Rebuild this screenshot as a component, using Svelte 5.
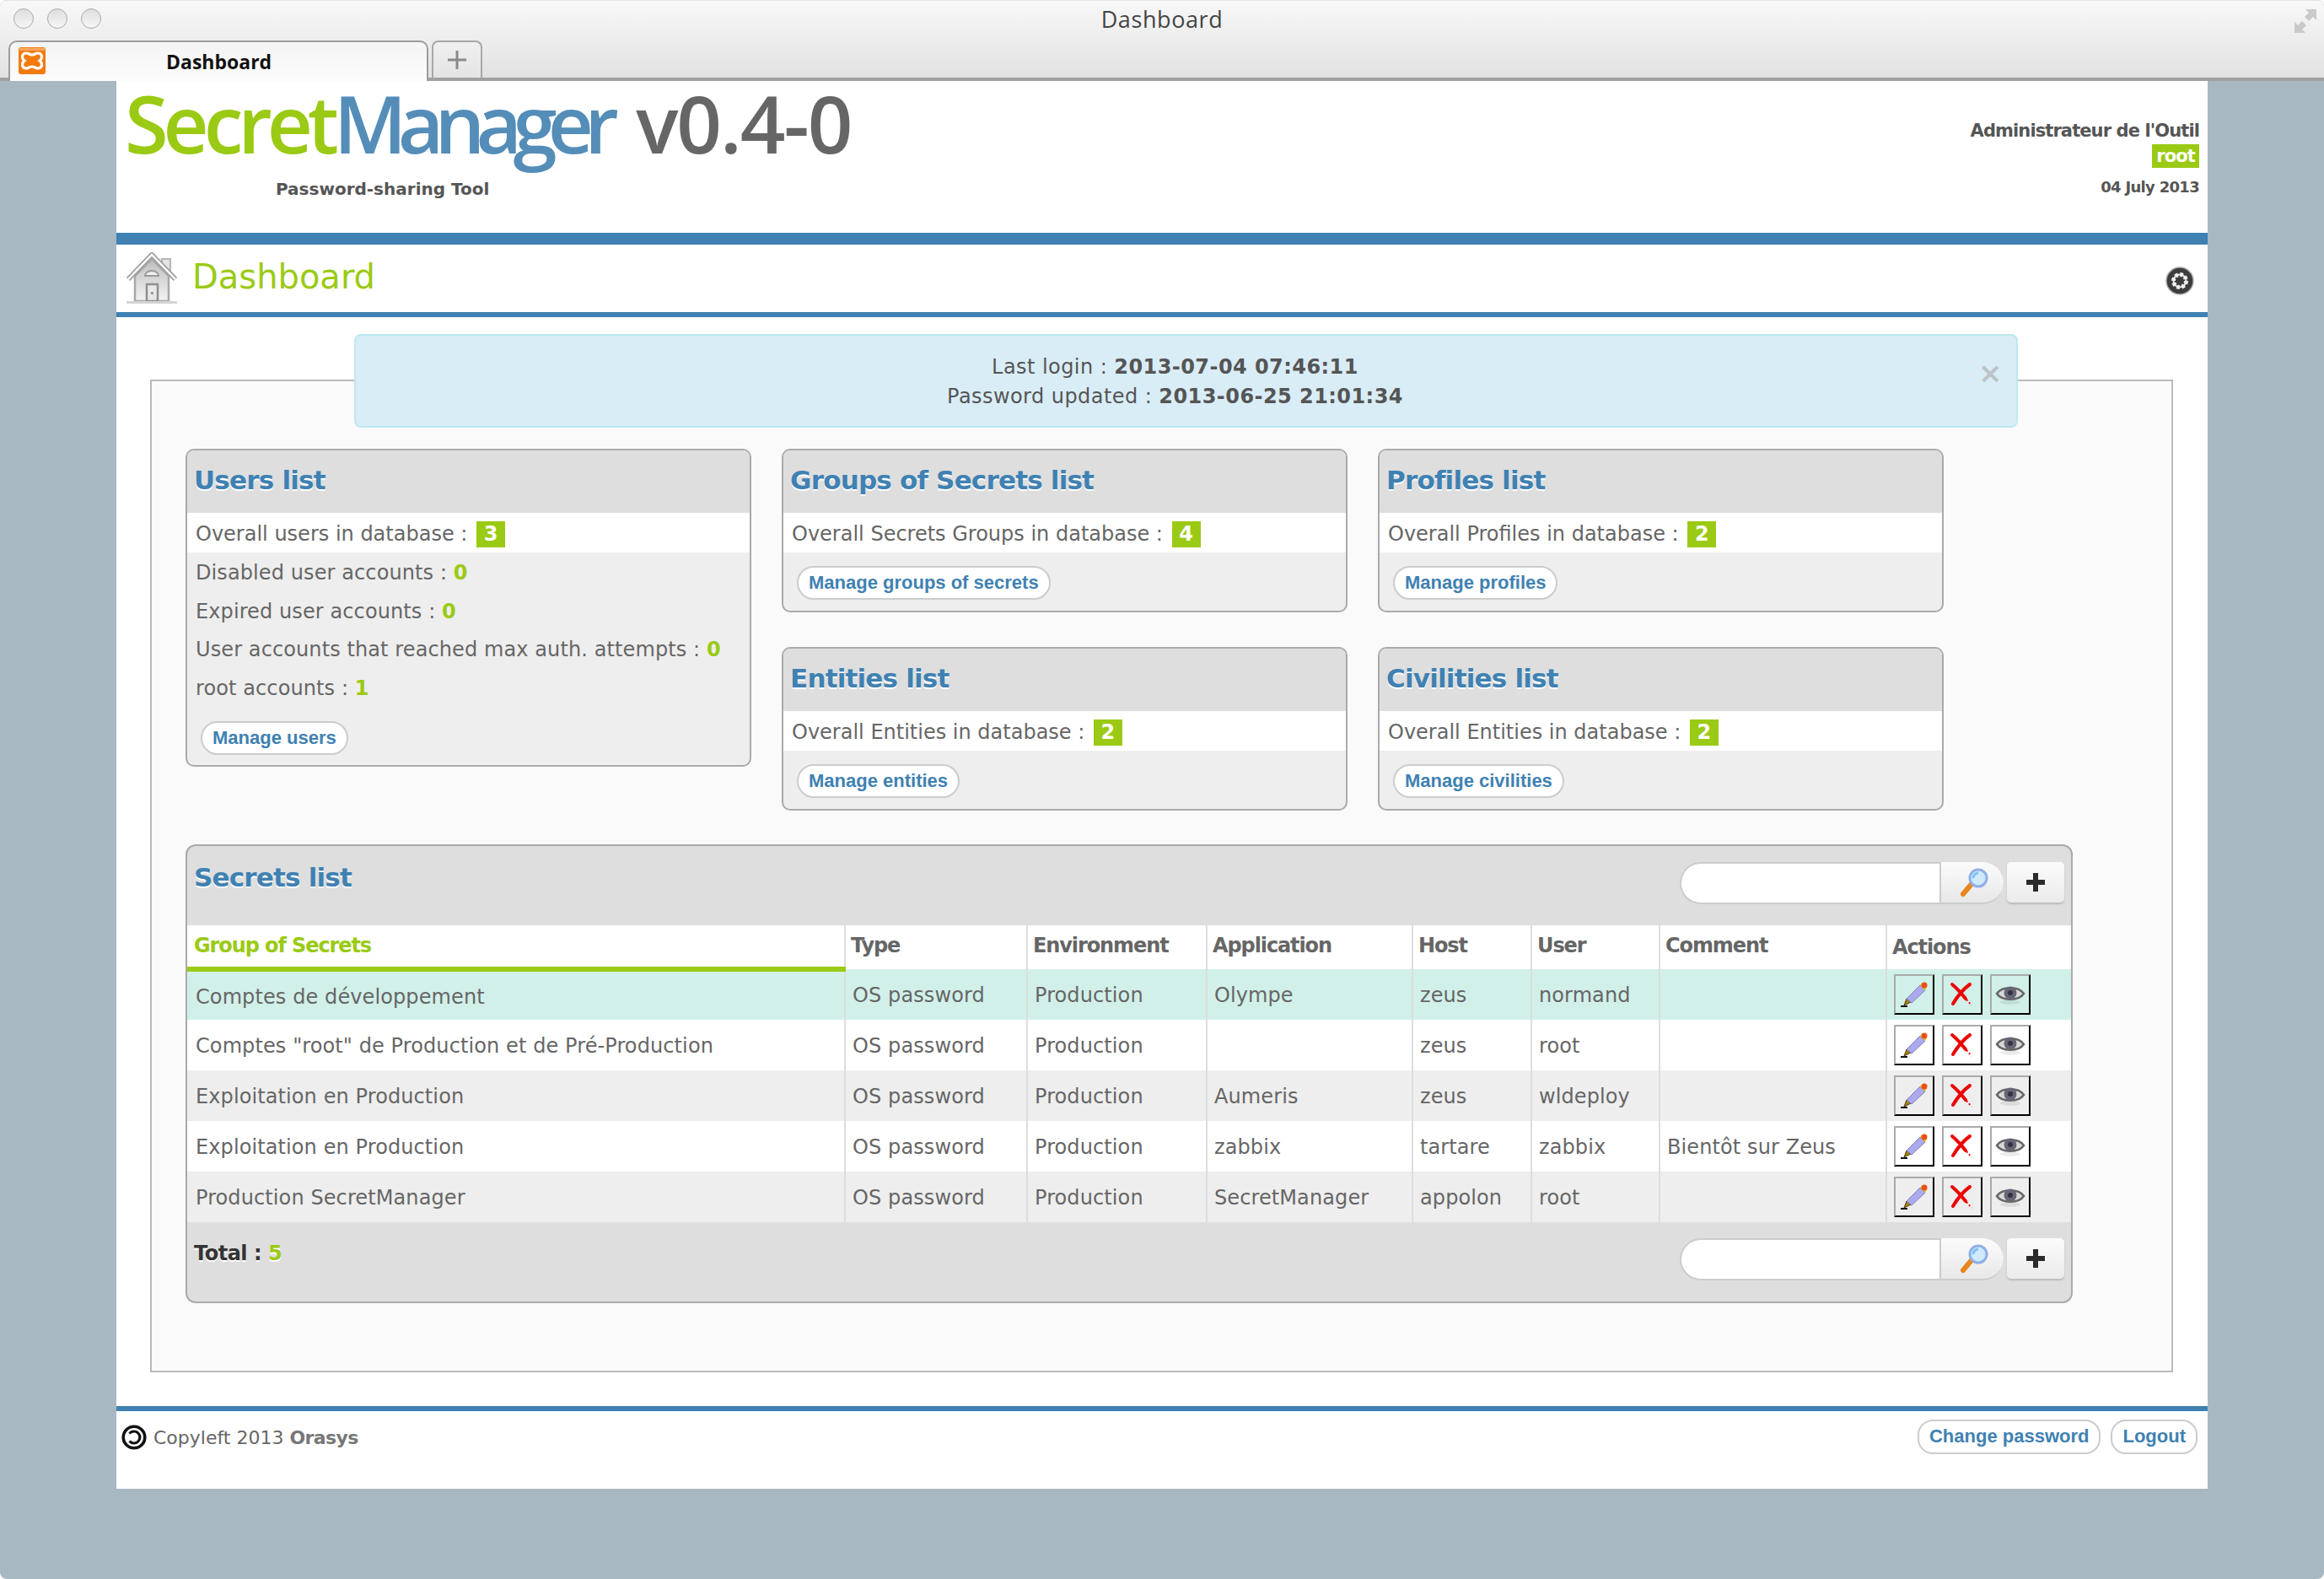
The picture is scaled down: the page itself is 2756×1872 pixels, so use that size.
<script lang="ts">
  const userStats = [
    { label: "Disabled user accounts", value: 0 },
    { label: "Expired user accounts", value: 0 },
    { label: "User accounts that reached max auth. attempts", value: 0 },
    { label: "root accounts", value: 1 },
  ];

  const columnTwo = [
    { title: "Groups of Secrets list", text: "Overall Secrets Groups in database", count: 4, action: "Manage groups of secrets" },
    { title: "Entities list", text: "Overall Entities in database", count: 2, action: "Manage entities" },
  ];
  const columnThree = [
    { title: "Profiles list", text: "Overall Profiles in database", count: 2, action: "Manage profiles" },
    { title: "Civilities list", text: "Overall Entities in database", count: 2, action: "Manage civilities" },
  ];

  const headers = ["Group of Secrets", "Type", "Environment", "Application", "Host", "User", "Comment", "Actions"];
  const widths = [780, 216, 213, 244, 141, 152, 269, 219];

  const secrets = [
    ["Comptes de développement", "OS password", "Production", "Olympe", "zeus", "normand", ""],
    ['Comptes "root" de Production et de Pré-Production', "OS password", "Production", "", "zeus", "root", ""],
    ["Exploitation en Production", "OS password", "Production", "Aumeris", "zeus", "wldeploy", ""],
    ["Exploitation en Production", "OS password", "Production", "zabbix", "tartare", "zabbix", "Bientôt sur Zeus"],
    ["Production SecretManager", "OS password", "Production", "SecretManager", "appolon", "root", ""],
  ];
</script>

{#snippet searchBar()}
  <div class="search">
    <div class="search-input"></div>
    <button class="search-go" aria-label="Search">
      <svg width="34" height="36" viewBox="0 0 34 36">
        <path d="M3 32 L13 20" stroke="#e8861c" stroke-width="6" stroke-linecap="round" />
        <circle cx="21" cy="13" r="10" fill="#cfeafc" stroke="#8fb0e8" stroke-width="3" />
        <path d="M15 13a6 6 0 0 1 6-6" stroke="#7fc0f0" stroke-width="3" fill="none" />
      </svg>
    </button>
    <button class="add" aria-label="Add">
      <svg width="24" height="24" viewBox="0 0 24 24"><path d="M9 1h6v8h8v6h-8v8H9v-8H1V9h8z" fill="#2b2b2b" /></svg>
    </button>
  </div>
{/snippet}

{#snippet smallCard(c)}
  <section class="card">
    <h2>{c.title}</h2>
    <div class="stat-main">{c.text} : <span class="badge">{c.count}</span></div>
    <div class="card-actions"><a class="pill" href="#top">{c.action}</a></div>
  </section>
{/snippet}

<div class="window">
  <div class="chrome">
    <div class="titlebar">
      <div class="lights"><i></i><i></i><i></i></div>
      <span class="win-title">Dashboard</span>
      <svg class="resize" width="28" height="30" viewBox="0 0 28 30">
        <path d="M14 1h13v13l-4-4-5 5-5-5 5-5zM1 29V16l4 4 5-5 5 5-5 5 4 4z" fill="#c9c9c9" />
      </svg>
    </div>
    <div class="tabstrip">
      <div class="tab">
        <svg class="xampp" width="32" height="32" viewBox="0 0 32 32">
          <rect width="32" height="32" rx="3" fill="#f47a0c" />
          <rect x="1" y="1" width="30" height="3" fill="#f9a860" />
          <path d="M9 7c-5 0-6 6-2 9-4 3-3 9 2 9 3 0 4-2 7-2s4 2 7 2c5 0 6-6 2-9 4-3 3-9-2-9-3 0-4 2-7 2s-4-2-7-2z" fill="none" stroke="#fff" stroke-width="3.2" />
        </svg>
        <span>Dashboard</span>
      </div>
      <div class="newtab">
        <svg width="22" height="22" viewBox="0 0 22 22"><path d="M9.5 0h3v9.5H22v3h-9.5V22h-3v-9.5H0v-3h9.5z" fill="#8a8a8a" /></svg>
      </div>
    </div>
  </div>

  <div class="page">
    <header class="brand">
      <div>
        <div class="logo"><span class="g">Secret</span><span class="b">Manager</span><span class="v">v0.4-0</span></div>
        <div class="tagline">Password-sharing Tool</div>
      </div>
      <div class="whoami">
        <div class="role">Administrateur de l'Outil</div>
        <div class="login">root</div>
        <div class="today">04 July 2013</div>
      </div>
    </header>

    <div class="titlerow">
      <svg width="64" height="62" viewBox="0 0 64 62">
        <defs>
          <linearGradient id="wall" x1="0" y1="0" x2="0" y2="1">
            <stop offset="0" stop-color="#bdbdbd" />
            <stop offset="1" stop-color="#f2f2f2" />
          </linearGradient>
        </defs>
        <rect x="44" y="8" width="10" height="20" fill="#e4e4e4" stroke="#b5b5b5" stroke-width="2" />
        <path d="M12 28 L32 8 L52 28 V58 H12z" fill="url(#wall)" stroke="#a8a8a8" stroke-width="2.5" />
        <path d="M4 32 L32 3 L60 32" fill="none" stroke="#a0a0a0" stroke-width="6" />
        <path d="M4 32 L32 3 L60 32" fill="none" stroke="#fff" stroke-width="2.5" />
        <path d="M24 28a8 6 0 0 1 16 0z" fill="#eee" stroke="#999" stroke-width="2" />
        <rect x="26" y="38" width="13" height="20" fill="#e8e8e8" stroke="#8f8f8f" stroke-width="2.5" />
        <rect x="31" y="47" width="3" height="3" fill="#999" />
        <rect x="2" y="58" width="60" height="3" fill="#d4d4d4" />
      </svg>
      <h1>Dashboard</h1>
      <svg class="gear" width="34" height="34" viewBox="0 0 34 34">
        <circle cx="17" cy="17" r="16" fill="#3d3d3d" stroke="#aaa" stroke-width="1.5" />
        <circle cx="17" cy="17" r="7.5" fill="none" stroke="#eee" stroke-width="5" stroke-dasharray="3.4 2.5" />
        <circle cx="17" cy="17" r="7.5" fill="none" stroke="#eee" stroke-width="2" />
      </svg>
    </div>

    <main class="content">
      <div class="alert">
        <div>Last login : <b>2013-07-04 07:46:11</b></div>
        <div>Password updated : <b>2013-06-25 21:01:34</b></div>
        <span class="close">×</span>
      </div>

      <div class="box">
        <div class="cards">
          <section class="card">
            <h2>Users list</h2>
            <div class="stat-main">Overall users in database : <span class="badge">3</span></div>
            <ul>
              {#each userStats as s}
                <li>{s.label} : <b>{s.value}</b></li>
              {/each}
            </ul>
            <div class="card-actions users"><a class="pill" href="#top">Manage users</a></div>
          </section>
          <div class="col">
            {#each columnTwo as c}{@render smallCard(c)}{/each}
          </div>
          <div class="col">
            {#each columnThree as c}{@render smallCard(c)}{/each}
          </div>
        </div>

        <section class="secrets">
          <div class="secrets-head">
            <h2>Secrets list</h2>
            {@render searchBar()}
          </div>
          <table>
            <colgroup>
              {#each widths as w}<col style:width="{w}px" />{/each}
            </colgroup>
            <thead>
              <tr>
                {#each headers as h, i}
                  <th class:sorted={i === 0} class:act={i === 7}>{h}</th>
                {/each}
              </tr>
            </thead>
            <tbody>
              {#each secrets as row, r}
                <tr class:hl={r === 0} class:odd={r % 2 === 0}>
                  {#each row as cell}<td>{cell}</td>{/each}
                  <td class="actions">
                    <div class="icons">
                      <button aria-label="Edit">
                        <svg width="34" height="34" viewBox="0 0 34 34">
                          <path d="M1 31h8" stroke="#111" stroke-width="2" />
                          <path d="M5 30l3-8 5 4z" fill="#a5800f" stroke="#4d3c06" stroke-width="1" />
                          <path d="M8 22L24 6l6 6-16 15z" fill="#aaaaec" stroke="#8080c0" stroke-width="1" />
                          <path d="M24 6l3-3 5 5-2 4z" fill="#f2c00f" />
                          <circle cx="29" cy="6" r="3.5" fill="#e8501a" />
                        </svg>
                      </button>
                      <button aria-label="Delete">
                        <svg width="34" height="34" viewBox="0 0 34 34">
                          <path d="M5 5c6 5 12 12 16 17M26 5C19 10 12 18 6 28" stroke="#ee0000" stroke-width="4" fill="none" stroke-linecap="round" />
                          <path d="M22 23l6 7" stroke="#ee0000" stroke-width="2" stroke-dasharray="2 2.5" />
                        </svg>
                      </button>
                      <button aria-label="View">
                        <svg width="36" height="30" viewBox="0 0 36 30">
                          <ellipse cx="18" cy="24" rx="12" ry="3" fill="#000" opacity=".08" />
                          <path d="M2 14C8 5 28 5 34 14 28 23 8 23 2 14z" fill="#d8d8d8" stroke="#666" stroke-width="2.5" />
                          <circle cx="18" cy="13" r="7.5" fill="#666678" />
                          <circle cx="18" cy="13" r="3" fill="#33333f" />
                        </svg>
                      </button>
                    </div>
                  </td>
                </tr>
              {/each}
            </tbody>
          </table>
          <div class="secrets-foot">
            <div class="total">Total : <b>5</b></div>
            {@render searchBar()}
          </div>
        </section>
      </div>
    </main>

    <footer>
      <div class="copy">
        <svg width="30" height="30" viewBox="0 0 30 30">
          <circle cx="15" cy="15" r="12.8" fill="none" stroke="#111" stroke-width="3.6" />
          <path d="M9.5 10.5a7 7 0 1 1 0 9" fill="none" stroke="#111" stroke-width="3.2" />
        </svg>
        <span>Copyleft 2013 <b>Orasys</b></span>
      </div>
      <div class="links">
        <a class="pill" href="#top">Change password</a>
        <a class="pill" href="#top">Logout</a>
      </div>
    </footer>
  </div>
</div>

<style>
  :global(body) {
    margin: 0;
    background: #fff;
  }

  .window {
    width: 2756px;
    height: 1872px;
    overflow: hidden;
    border-radius: 8px;
    font-family: "DejaVu Sans", Verdana, sans-serif;
    color: #666;
    background: #a8b8c2;
  }

  .chrome {
    height: 96px;
    box-sizing: border-box;
    background: linear-gradient(#f8f8f8, #e2e2e2);
    border-bottom: 4px solid #a0a0a0;
    border-top: 1px solid #e8e8e8;
    position: relative;
  }

  .titlebar {
    height: 47px;
    display: flex;
    align-items: center;
    justify-content: center;
    position: relative;
  }

  .lights {
    position: absolute;
    left: 16px;
    top: 9px;
    display: flex;
    gap: 16px;
  }

  .lights i {
    width: 22px;
    height: 22px;
    border-radius: 50%;
    border: 1px solid #aaa;
    background: linear-gradient(#dedede, #f6f6f6);
  }

  .win-title {
    font-family: "Open Sans", sans-serif;
    font-size: 27px;
    color: #444;
    margin-bottom: 5px;
    letter-spacing: 0.6px;
  }

  .resize {
    position: absolute;
    right: 8px;
    top: 9px;
  }

  .tabstrip {
    display: flex;
    padding-left: 10px;
    gap: 4px;
    height: 48px;
  }

  .tab {
    width: 498px;
    height: 48px;
    box-sizing: border-box;
    border: 2px solid #9c9c9c;
    border-bottom: none;
    border-radius: 10px 10px 0 0;
    background: linear-gradient(#f4f4f4, #fcfcfc);
    display: flex;
    align-items: center;
    position: relative;
    font-family: "Open Sans", sans-serif;
    font-weight: 700;
    font-size: 23px;
    color: #111;
    z-index: 1;
  }

  .tab span {
    margin-left: 143px;
  }

  .xampp {
    margin-left: 10px;
    margin-top: -2px;
  }

  .newtab {
    width: 60px;
    height: 44px;
    box-sizing: border-box;
    border: 2px solid #a8a8a8;
    border-bottom: none;
    border-radius: 8px 8px 0 0;
    background: linear-gradient(#f0f0f0, #e4e4e4);
    display: flex;
    align-items: center;
    justify-content: center;
  }

  .page {
    margin-left: 138px;
    width: 2480px;
    height: 1669px;
    background: #fff;
    display: flex;
    flex-direction: column;
  }

  .brand {
    height: 180px;
    box-sizing: border-box;
    display: flex;
    justify-content: space-between;
    padding: 0 10px 0 10px;
  }

  .logo {
    font-family: "Open Sans", sans-serif;
    font-weight: 600;
    font-size: 94px;
    line-height: 100px;
    white-space: nowrap;
  }

  .logo .g {
    color: #9aca14;
    letter-spacing: -6.1px;
  }

  .logo .b {
    color: #548db8;
    letter-spacing: -10.7px;
  }

  .logo .v {
    color: #666;
    margin-left: 31px;
    letter-spacing: -2px;
  }

  .tagline {
    margin: 16px 0 0 179px;
    font-size: 20px;
    font-weight: 700;
    color: #555;
  }

  .whoami {
    text-align: right;
    font-weight: 700;
    font-size: 21px;
    letter-spacing: -0.9px;
    color: #555;
    padding-top: 46px;
  }

  .role {
    line-height: 26px;
  }

  .login {
    display: inline-block;
    background: #9aca14;
    color: #fff;
    padding: 0 5px;
    line-height: 28px;
    margin-top: 3px;
  }

  .today {
    font-size: 18px;
    letter-spacing: -0.7px;
    margin-top: 12px;
  }

  .titlerow {
    height: 100px;
    flex: none;
    box-sizing: border-box;
    border-top: 14px solid #3f81b2;
    border-bottom: 6px solid #3f81b2;
    display: flex;
    align-items: center;
    padding: 0 16px 0 10px;
  }

  h1 {
    margin: 0 0 5px 16px;
    flex: 1;
    font-size: 40px;
    font-weight: 400;
    color: #9aca14;
  }

  .gear {
    margin-top: 6px;
  }

  .content {
    flex: none;
    position: relative;
    padding: 74px 40px 40px;
  }

  .alert {
    position: absolute;
    left: 282px;
    top: 20px;
    width: 1973px;
    height: 111px;
    box-sizing: border-box;
    background: #d9edf7;
    border: 2px solid #bce8f1;
    border-radius: 8px;
    text-align: center;
    font-size: 24px;
    letter-spacing: 0.44px;
    line-height: 34.5px;
    padding: 20px 26px 0 0;
    color: #555;
  }

  .close {
    position: absolute;
    right: 16px;
    top: 27px;
    font-size: 34px;
    font-weight: 700;
    color: #bcc4c8;
  }

  .box {
    width: 2399px;
    height: 1177px;
    box-sizing: border-box;
    border: 2px solid #bbb;
    background: #fafafa;
    padding: 80px 40px 0;
  }

  .cards {
    display: flex;
    gap: 36px;
    align-items: flex-start;
    height: 469px;
  }

  .col {
    display: flex;
    flex-direction: column;
    gap: 41px;
  }

  .card {
    width: 671px;
    box-sizing: border-box;
    border: 2px solid #aaa;
    border-radius: 10px;
    background: #eee;
    overflow: hidden;
  }

  .card h2 {
    margin: 0;
    height: 74px;
    box-sizing: border-box;
    padding: 16px 8px 0;
    background: #dedede;
  }

  h2 {
    font-size: 31px;
    line-height: 38px;
    font-weight: 700;
    letter-spacing: -0.8px;
    color: #3f81b2;
    text-shadow: 0 2px 0 #fff;
  }

  .stat-main {
    height: 47px;
    box-sizing: border-box;
    padding: 3px 0 0 10px;
    background: #fff;
    display: flex;
    align-items: center;
    gap: 3px;
    font-size: 24px;
    white-space: pre;
  }

  .badge {
    display: inline-block;
    min-width: 34px;
    height: 31px;
    line-height: 31px;
    text-align: center;
    background: #9aca14;
    color: #fff;
    font-weight: 700;
  }

  ul {
    list-style: none;
    margin: 2px 0 0;
    padding: 0;
  }

  li {
    height: 45.6px;
    line-height: 45.6px;
    padding-left: 10px;
    font-size: 24px;
    letter-spacing: 0.1px;
  }

  li b {
    color: #9aca14;
  }

  .card-actions {
    padding: 16px 16px 13px;
    display: flex;
  }

  .card-actions.users {
    padding: 16px 16px 12px;
  }

  .pill {
    display: inline-block;
    height: 40px;
    box-sizing: border-box;
    line-height: 36px;
    padding: 0 12px;
    border: 2px solid #ccc;
    border-radius: 20px;
    background: #fff;
    font-family: "Liberation Sans", Arial, sans-serif;
    font-size: 22px;
    font-weight: 700;
    color: #3f81b2;
    text-decoration: none;
    white-space: nowrap;
  }

  .secrets {
    width: 2238px;
    height: 544px;
    box-sizing: border-box;
    border: 2px solid #aaa;
    border-radius: 12px;
    background: #dedede;
    overflow: hidden;
    display: flex;
    flex-direction: column;
  }

  .secrets-head {
    height: 94px;
    display: flex;
    justify-content: space-between;
    padding: 0 8px;
    flex: none;
  }

  .secrets-head h2 {
    margin: 18px 0 0;
  }

  .search {
    display: flex;
    align-items: flex-start;
    margin: 19px 0 0;
    gap: 4px;
  }

  .search-input {
    width: 310px;
    height: 50px;
    box-sizing: border-box;
    background: #fff;
    border: 2px solid #ccc;
    border-radius: 25px 0 0 25px;
    margin-right: -4px;
  }

  .search-go {
    width: 74px;
    height: 50px;
    padding: 0 0 0 6px;
    border: none;
    border-bottom: 2px solid #ccc;
    border-radius: 0 25px 25px 0;
    background: linear-gradient(#fbfbfb, #e8e8e8);
    display: flex;
    align-items: center;
    justify-content: center;
  }

  .add {
    width: 68px;
    height: 48px;
    padding: 0;
    border: none;
    border-radius: 5px;
    background: linear-gradient(#fbfbfb, #ebebeb);
    box-shadow: 0 2px 2px #bbb;
    display: flex;
    align-items: center;
    justify-content: center;
  }

  table {
    width: 2234px;
    flex: none;
    border-collapse: collapse;
    table-layout: fixed;
    font-size: 24px;
    background: #fff;
  }

  th {
    height: 52px;
    box-sizing: border-box;
    padding: 0 0 5px 6px;
    text-align: left;
    font-weight: 700;
    letter-spacing: -1.1px;
    color: #666;
    background: #fff;
    white-space: nowrap;
    border-left: 2px solid #ddd;
  }

  th.sorted {
    color: #9aca14;
    border-left: none;
    border-bottom: 6px solid #9aca14;
    padding: 0 0 2px 8px;
  }

  th.act {
    padding: 0 0 0 6px;
  }

  td {
    height: 60px;
    padding: 2px 0 0 8px;
    box-sizing: border-box;
    border-left: 2px solid #ddd;
    white-space: nowrap;
    color: #666;
    letter-spacing: 0.1px;
  }

  td.actions {
    padding-top: 0;
  }

  td:first-child {
    border-left: none;
    padding-left: 10px;
  }

  tr.odd td {
    background: #eee;
  }

  tr.hl td {
    background: #d1f0e9;
  }

  .icons {
    display: flex;
    gap: 9px;
  }

  .icons button {
    width: 48px;
    height: 48px;
    padding: 0;
    box-sizing: border-box;
    background: transparent;
    border-style: solid;
    border-width: 2px;
    border-color: #aaa #000 #000 #aaa;
    display: flex;
    align-items: center;
    justify-content: center;
  }

  .secrets-foot {
    flex: 1;
    display: flex;
    justify-content: space-between;
    padding: 0 8px;
  }

  .total {
    margin-top: 22px;
    font-size: 24px;
    line-height: 30px;
    font-weight: 700;
    letter-spacing: -0.5px;
    color: #333;
    text-shadow: 0 2px 0 #fff;
  }

  .total b {
    color: #9aca14;
  }

  footer {
    flex: 1;
    border-top: 6px solid #3f81b2;
    padding: 10px 12px 0 6px;
    display: flex;
    justify-content: space-between;
    align-items: flex-start;
    font-size: 22px;
    color: #666;
  }

  .copy {
    display: flex;
    align-items: center;
    gap: 8px;
    margin-top: 6px;
  }

  .copy b {
    color: #777;
    letter-spacing: -0.6px;
  }

  .links {
    display: flex;
    gap: 12px;
  }

  .links .pill {
    height: 41px;
    border-radius: 18px;
  }
</style>
